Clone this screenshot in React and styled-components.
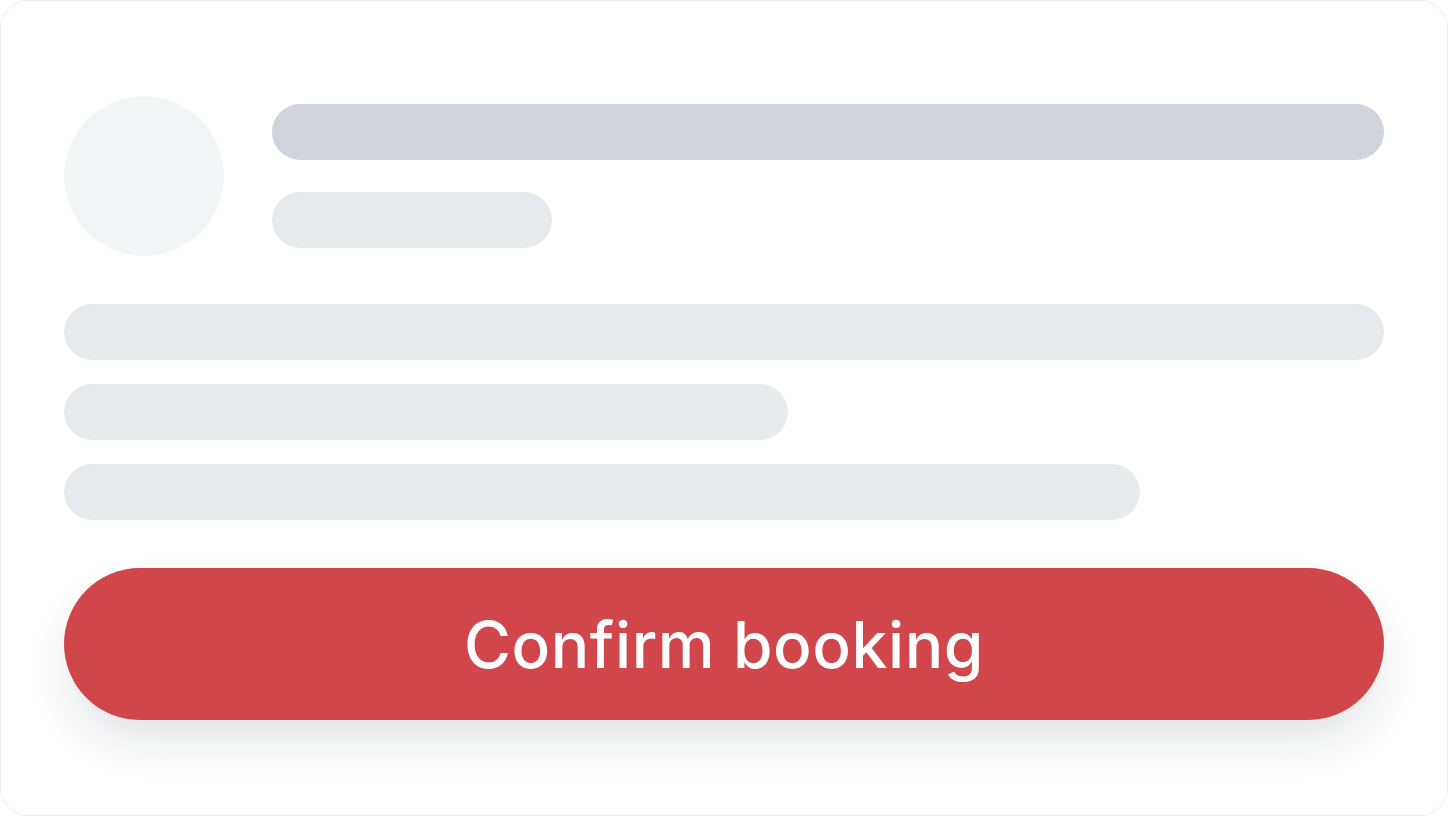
import React from 'react';
import styled, { createGlobalStyle } from 'styled-components';

const GlobalStyle = createGlobalStyle`
  html, body {
    margin: 0;
    padding: 0;
    background: #ffffff;
  }
  * {
    box-sizing: border-box;
  }
`;

const Card = styled.div`
  width: 1448px;
  height: 816px;
  background: #ffffff;
  border: 1px solid #eceef1;
  border-radius: 28px;
  padding: 95px 63px;
  display: flex;
  flex-direction: column;
  font-family: Inter, 'Liberation Sans', sans-serif;
`;

const Header = styled.div`
  display: flex;
  align-items: center;
  gap: 48px;
`;

const Avatar = styled.div`
  width: 160px;
  height: 160px;
  border-radius: 50%;
  background: #f3f4f6;
  flex-shrink: 0;
`;

const HeaderLines = styled.div`
  flex: 1;
  display: flex;
  flex-direction: column;
  gap: 32px;
`;

const Bar = styled.div`
  height: 56px;
  border-radius: 28px;
  width: ${(p) => p.$width || '100%'};
  background: ${(p) => (p.$strong ? '#d1d5db' : '#e9eaee')};
`;

const Body = styled.div`
  display: flex;
  flex-direction: column;
  gap: 24px;
  margin-top: 48px;
`;

const ConfirmButton = styled.button`
  margin-top: 48px;
  height: 152px;
  width: 100%;
  border: none;
  border-radius: 76px;
  background: #d1464a;
  color: #ffffff;
  font-family: Inter, 'Liberation Sans', sans-serif;
  font-size: 64px;
  font-weight: 500;
  letter-spacing: 0.6px;
  cursor: pointer;
  box-shadow: 0 24px 48px -6px rgba(17, 24, 39, 0.13);
`;

const App = () => {
  return (
    <>
      <GlobalStyle />
      <Card>
        <Header>
          <Avatar />
          <HeaderLines>
            <Bar $strong />
            <Bar $width="280px" />
          </HeaderLines>
        </Header>
        <Body>
          <Bar />
          <Bar $width="724px" />
          <Bar $width="1076px" />
        </Body>
        <ConfirmButton>Confirm booking</ConfirmButton>
      </Card>
    </>
  );
};

export default App;
